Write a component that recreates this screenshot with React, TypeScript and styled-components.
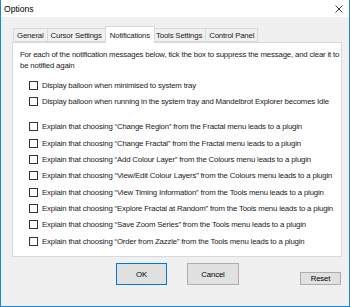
import React from "react";
import styled, { createGlobalStyle } from "styled-components";

const Global = createGlobalStyle`
  html, body { margin: 0; padding: 0; background: #ffffff; }
  body { font-family: "Liberation Sans", Arial, sans-serif; }
  * { box-sizing: border-box; }
`;

const Window = styled.div`
  width: 350px;
  height: 307px;
  border: 1px solid #1a86d9;
  border-top: none;
  display: flex;
  flex-direction: column;
  background: #f0f0f0;
  font-family: "Liberation Sans", Arial, sans-serif;
  color: #1a1a1a;
  font-size: 7.8px;
  letter-spacing: -0.17px;
  overflow: hidden;
`;

const TitleBar = styled.div`
  height: 17px;
  flex: none;
  background: #ffffff;
  display: flex;
  align-items: center;
  justify-content: space-between;
  padding: 0 6px 0 3px;
  font-size: 8.6px;
  letter-spacing: 0;
  color: #000;
`;

const CloseIcon = styled.svg`
  width: 8px;
  height: 8px;
  display: block;
`;

const Body = styled.div`
  flex: 1;
  display: flex;
  flex-direction: column;
  padding: 9px 7px 0 11px;
`;

const TabRow = styled.div`
  display: flex;
  align-items: flex-end;
  height: 16px;
  padding-left: 2px;
`;

const Tab = styled.div<{ $active?: boolean }>`
  height: ${(p) => (p.$active ? "17px" : "14px")};
  padding: 0 ${(p) => (p.$active ? "4px" : "3px")};
  margin: 0 ${(p) => (p.$active ? "-2px" : "0")} ${(p) => (p.$active ? "-1px" : "0")} ${(p) => (p.$active ? "-1px" : "-1px")};
  background: ${(p) => (p.$active ? "#ffffff" : "#f0f0f0")};
  border: 1px solid #d9d9d9;
  border-bottom: ${(p) => (p.$active ? "none" : "1px solid #d9d9d9")};
  display: flex;
  align-items: center;
  white-space: nowrap;
  position: relative;
  z-index: ${(p) => (p.$active ? 2 : 1)};
`;

const Panel = styled.div`
  height: 215px;
  flex: none;
  background: #ffffff;
  border: 1px solid #d9d9d9;
  padding: 6px 0 0 7px;
  display: flex;
  flex-direction: column;
`;

const Intro = styled.div`
  line-height: 11px;
  width: 322px;
  margin-bottom: 6px;
`;

const Group = styled.div<{ $gap: number }>`
  display: flex;
  flex-direction: column;
  margin-top: ${(p) => p.$gap}px;
  padding-left: 9px;
`;

const Row = styled.label`
  display: flex;
  align-items: center;
  height: 16.33px;
  gap: 4px;
  white-space: nowrap;
`;

const Box = styled.span`
  width: 9px;
  height: 9px;
  border: 1px solid #333333;
  background: #ffffff;
  flex: none;
`;

const Footer = styled.div`
  display: flex;
  align-items: flex-end;
  padding-top: 6px;
`;

const Button = styled.div<{ $focused?: boolean; $w: number; $h: number; $ml: number }>`
  width: ${(p) => p.$w}px;
  height: ${(p) => p.$h}px;
  margin-left: ${(p) => p.$ml}px;
  background: #e1e1e1;
  border: 1px solid ${(p) => (p.$focused ? "#0078d7" : "#adadad")};
  display: flex;
  align-items: center;
  justify-content: center;
  color: #000;
`;

const systemRows = [
  "Display balloon when minimised to system tray",
  "Display balloon when running in the system tray and Mandelbrot Explorer becomes Idle",
];

const pluginRows = [
  "Explain that choosing \u201CChange Region\u201D from the Fractal menu leads to a plugin",
  "Explain that choosing \u201CChange Fractal\u201D from the Fractal menu leads to a plugin",
  "Explain that choosing \u201CAdd Colour Layer\u201D from the Colours menu leads to a plugin",
  "Explain that choosing \u201CView/Edit Colour Layers\u201D from the Colours menu leads to a plugin",
  "Explain that choosing \u201CView Timing Information\u201D from the Tools menu leads to a plugin",
  "Explain that choosing \u201CExplore Fractal at Random\u201D from the Tools menu leads to a plugin",
  "Explain that choosing \u201CSave Zoom Series\u201D from the Tools menu leads to a plugin",
  "Explain that choosing \u201COrder from Zazzle\u201D from the Tools menu leads to a plugin",
];

export default function App() {
  return (
    <>
      <Global />
      <Window>
        <TitleBar>
          <span>Options</span>
          <CloseIcon viewBox="0 0 8 8">
            <path d="M0.5 0.5 L7.5 7.5 M7.5 0.5 L0.5 7.5" stroke="#222" strokeWidth="0.9" fill="none" />
          </CloseIcon>
        </TitleBar>
        <Body>
          <TabRow>
            <Tab>General</Tab>
            <Tab>Cursor Settings</Tab>
            <Tab $active>Notifications</Tab>
            <Tab>Tools Settings</Tab>
            <Tab>Control Panel</Tab>
          </TabRow>
          <Panel>
            <Intro>
              For each of the notification messages below, tick the box to suppress the message, and clear it
              to be notified again
            </Intro>
            <Group $gap={0}>
              {systemRows.map((t) => (
                <Row key={t}>
                  <Box />
                  <span>{t}</span>
                </Row>
              ))}
            </Group>
            <Group $gap={9}>
              {pluginRows.map((t) => (
                <Row key={t}>
                  <Box />
                  <span>{t}</span>
                </Row>
              ))}
            </Group>
          </Panel>
          <Footer>
            <Button $focused $w={51} $h={22} $ml={104}>OK</Button>
            <Button $w={52} $h={22} $ml={20}>Cancel</Button>
            <Button $w={41} $h={13} $ml={61}>Reset</Button>
          </Footer>
        </Body>
      </Window>
    </>
  );
}
